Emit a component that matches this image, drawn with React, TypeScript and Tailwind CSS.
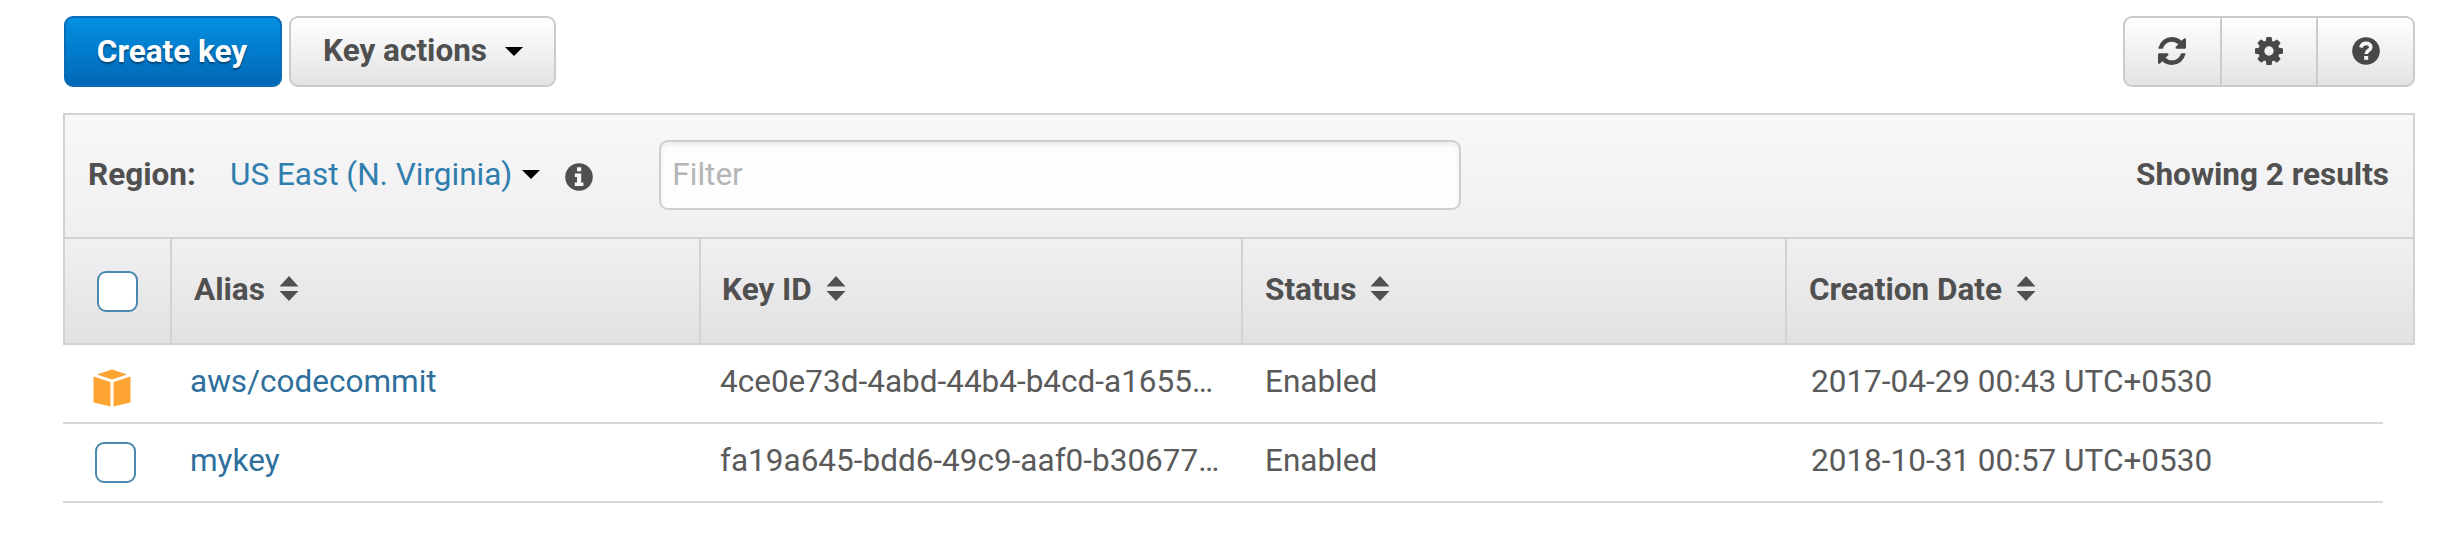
import React from "react";

const caret = "w-0 border-x-[9px] border-t-[9px] border-x-transparent border-t-black";

function RefreshIcon() {
  return (
    <svg viewBox="128 128 1536 1536" className="size-7" fill="currentColor">
      <path d="M1639 1056q0 5-1 7-64 268-268 434.5t-478 166.5q-146 0-282.5-55t-243.5-157l-129 129q-19 19-45 19t-45-19-19-45v-448q0-26 19-45t45-19h448q26 0 45 19t19 45-19 45l-137 137q71 66 161 102t187 36q134 0 250-65t186-179q11-17 53-117 8-23 30-23h192q13 0 22.5 9.5t9.5 22.5zm25-800v448q0 26-19 45t-45 19h-448q-26 0-45-19t-19-45 19-45l138-138q-148-137-349-137-134 0-250 65t-186 179q-11 17-53 117-8 23-30 23h-199q-13 0-22.5-9.5t-9.5-22.5v-7q65-268 270-434.5t480-166.5q146 0 284 55.5t245 156.5l130-129q19-19 45-19t45 19 19 45z" />
    </svg>
  );
}

function GearIcon() {
  return (
    <svg viewBox="128 128 1536 1536" className="size-7" fill="currentColor">
      <path d="M1152 896q0-106-75-181t-181-75-181 75-75 181 75 181 181 75 181-75 75-181zm512-109v222q0 12-8 23t-20 13l-185 28q-19 54-39 91 35 50 107 138 10 12 10 25t-9 23q-27 37-99 108t-94 71q-12 0-26-9l-138-108q-44 23-91 38-16 136-29 186-7 28-36 28h-222q-14 0-24.5-8.5t-11.5-21.5l-28-184q-49-16-90-37l-141 107q-10 9-25 9-14 0-25-11-126-114-165-168-7-10-7-23 0-12 8-23 15-21 51-66.5t54-70.5q-27-50-41-99l-183-27q-13-2-21-12.5t-8-23.5v-222q0-12 8-23t19-13l186-28q14-46 39-92-40-57-107-138-10-12-10-24 0-10 9-23 26-36 98.5-107.5t94.5-71.5q13 0 26 10l138 107q44-23 91-38 16-136 29-186 7-28 36-28h222q14 0 24.5 8.5t11.5 21.5l28 184q49 16 90 37l142-107q9-9 24-9 13 0 25 10 129 119 165 170 7 8 7 22 0 12-8 23-15 21-51 66.5t-54 70.5q26 50 41 98l183 28q13 2 21 12.5t8 23.5z" />
    </svg>
  );
}

function HelpIcon() {
  return (
    <svg viewBox="0 0 28 28" className="size-7">
      <circle cx="14" cy="14" r="13.8" fill="currentColor" />
      <path d="M8.800 10.500C9.700 7.500 11.700 6.400 14 6.400C16.900 6.400 18.800 8 18.800 10.300C18.800 13.300 14.200 13.300 14.200 17" fill="none" stroke="#f5f5f5" strokeWidth="3.600" />
      <rect x="12.200" y="19" width="4" height="3.800" fill="#f5f5f5" />
    </svg>
  );
}

function InfoIcon() {
  return (
    <svg viewBox="0 0 28 28" className="size-7">
      <circle cx="14" cy="14" r="13.8" fill="currentColor" />
      <path d="M12 4.200h4.200v4H12zM9.800 10.500h6.400v9h2.200v3.400H9.800v-3.400H12v-5.600H9.800z" fill="#f7f7f7" />
    </svg>
  );
}

function SortIcon() {
  return (
    <svg viewBox="0 0 20 25" className="mb-[3px] h-[25px] w-5" fill="currentColor">
      <path d="M10 0L19.500 10.500H0.500zM0.500 15H19.500L10 25z" />
    </svg>
  );
}

function CubeIcon() {
  return (
    <svg viewBox="0 0 38 38" className="ml-[30px] mt-2 h-[38px] w-[38px]" fill="#fda433">
      <path d="M19 0.500L34 5.500L19 10.500L4 5.500zM0.500 7.500L17.500 13V37.500L0.500 33.500zM37.500 7.500L20.500 13V37.500L37.500 33.500z" />
    </svg>
  );
}

function HeaderCell({ label, className }: { label: string; className: string }) {
  return (
    <div className={`flex items-center gap-[14px] border-l-2 border-[#d2d2d2] pb-[3px] ${className}`}>
      <span>{label}</span>
      <SortIcon />
    </div>
  );
}

const rows = [
  { alias: "aws/codecommit", id: "4ce0e73d-4abd-44b4-b4cd-a1655…", date: "2017-04-29 00:43 UTC+0530", managed: true },
  { alias: "mykey", id: "fa19a645-bdd6-49c9-aaf0-b30677…", date: "2018-10-31 00:57 UTC+0530", managed: false },
];

const greyButton = "border-2 border-[#cbcbcb] bg-linear-to-b from-white to-[#e3e3e3]";

export default function App() {
  return (
    <div className="h-[560px] w-[2444px] bg-white pl-[63px] pt-4 font-['Roboto',sans-serif] text-[31.5px] leading-9 text-[#505050]">
      <div className="flex h-[71px] w-[2352px] items-stretch">
        <button className="ml-px w-[218px] rounded-[9px] border-2 border-[#0a6cb4] bg-linear-to-b from-[#0490e2] to-[#0168b6] pr-[2px] font-bold text-white [text-shadow:0_2px_2px_rgba(0,0,0,0.4)]">
          Create key
        </button>
        <button className={`ml-[7px] flex w-[267px] items-center rounded-[9px] pb-px pl-[32px] font-bold ${greyButton}`}>
          Key actions
          <span className={`ml-[18px] ${caret}`} />
        </button>
        <div className={`ml-auto flex w-[292px] rounded-[9px] text-[#484848] ${greyButton}`}>
          <button className="flex flex-1 items-center justify-center border-r-2 border-[#cbcbcb] pb-[2px]"><RefreshIcon /></button>
          <button className="flex flex-1 items-center justify-center border-r-2 border-[#cbcbcb] pb-[2px]"><GearIcon /></button>
          <button className="flex flex-1 items-center justify-center pb-[2px]"><HelpIcon /></button>
        </div>
      </div>

      <div className="mt-[26px] w-[2352px] border-2 border-[#d2d2d2]">
        <div className="flex h-[122px] items-center bg-linear-to-b from-[#f8f8f8] to-[#f0eef1] pb-[3px] pl-[23px] pr-6">
          <span className="w-[142px] font-bold">Region:</span>
          <a className="text-[#2f7eae]">US East (N. Virginia)</a>
          <span className={`ml-[10px] ${caret}`} />
          <span className="ml-[25px] mt-1"><InfoIcon /></span>
          <input
            placeholder="Filter"
            className="ml-[66px] h-[70px] w-[802px] rounded-[9px] border-2 border-[#cfcfcf] bg-[#fdfdfd] px-[11px] shadow-[inset_0_3px_4px_rgba(0,0,0,0.07)] placeholder:text-[#b5b5b5]"
          />
          <span className="ml-auto font-bold">Showing 2 results</span>
        </div>
        <div className="flex h-[106px] items-stretch border-t-2 border-[#d2d2d2] bg-linear-to-b from-[#f1eff2] to-[#e2e2e2] font-bold">
          <div className="w-[105px] pl-8 pt-[32px]">
            <div className="size-[41px] rounded-[9px] border-2 border-[#4a88ad] bg-white" />
          </div>
          <HeaderCell label="Alias" className="w-[529px] pl-[22px]" />
          <HeaderCell label="Key ID" className="w-[542px] pl-[21px]" />
          <HeaderCell label="Status" className="w-[544px] pl-[22px]" />
          <HeaderCell label="Creation Date" className="flex-1 pl-[22px]" />
        </div>
      </div>

      {rows.map((row) => (
        <div key={row.alias} className="flex h-[79px] w-[2320px] items-center border-b-2 border-[#d8d8d8] text-[#5a5a5a]">
          <div className="w-[127px]">
            {row.managed ? <CubeIcon /> : <div className="ml-8 size-[41px] rounded-[9px] border-2 border-[#4a88ad]" />}
          </div>
          <a className="w-[530px] pb-1 text-[#2f6f9c]">{row.alias}</a>
          <span className="w-[545px] pb-1">{row.id}</span>
          <span className="w-[546px] pb-1">Enabled</span>
          <span className="pb-1">{row.date}</span>
        </div>
      ))}
    </div>
  );
}
